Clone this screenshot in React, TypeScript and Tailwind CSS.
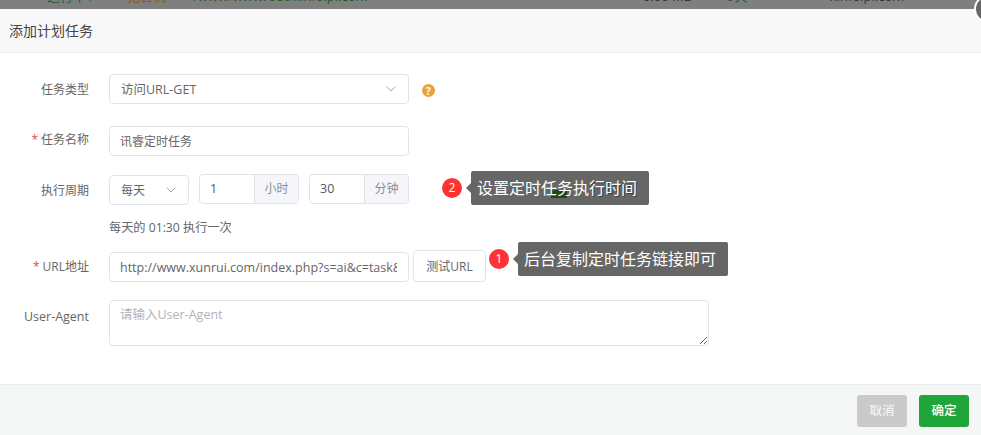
import { ChevronDown } from "lucide-react";
import type { ReactNode } from "react";

const FONT = "font-['Open_Sans','Noto_Sans_CJK_SC',sans-serif]";
const BORDER = "border border-[#e2e2ea]";

function Row({
  label,
  required,
  children,
  className = "",
  labelClass = "pt-[7px] text-[12px]",
}: {
  label: string;
  required?: boolean;
  children: ReactNode;
  className?: string;
  labelClass?: string;
}) {
  return (
    <div className={`flex items-start ${className}`}>
      <label className={`w-[89px] shrink-0 text-right leading-[18px] text-[#666] ${labelClass}`}>
        {required && <span className="mr-[3px] text-[#e5484d]">*</span>}
        {label}
      </label>
      <div className="ml-[20px] flex items-start">{children}</div>
    </div>
  );
}

function Addon({ value, unit, className = "" }: { value: string; unit: string; className?: string }) {
  return (
    <div className={`flex h-[30px] w-[100px] overflow-hidden rounded-[4px] ${BORDER} ${className}`}>
      <div className="w-[54px] pl-[10px] text-[12.5px] leading-[28px] text-[#555]">{value}</div>
      <div className="flex-1 border-l border-[#e2e2ea] bg-[#f4f6fa] text-center text-[12px] leading-[28px] text-[#8a8f99]">{unit}</div>
    </div>
  );
}

function Note({ n, children, className }: { n: number; children: ReactNode; className: string }) {
  return (
    <div className={`absolute flex items-center ${className}`}>
      <span className="flex h-[20px] w-[20px] items-center justify-center rounded-full bg-[#ff3333] text-[12px] text-white">{n}</span>
      <span className="ml-[4px] h-0 w-0 border-y-[5px] border-r-[5px] border-y-transparent border-r-[#666]" />
      <span className="relative flex h-[34px] items-center rounded-[2px] bg-[#666] pl-[6px] pr-[12px] text-[16px] text-white">{children}</span>
    </div>
  );
}

export default function App() {
  return (
    <div className={`relative flex h-[435px] w-[981px] flex-col overflow-hidden bg-white ${FONT}`}>
      {/* dimmed table behind the dialog */}
      <div className="h-[9px] shrink-0 overflow-hidden bg-[#7f7f7f] text-[13px] leading-[18px]">
        <div className="-mt-[13px] flex whitespace-nowrap">
          <span className="ml-[47px] w-[80px] text-[#1d5f3c]">运行中 /</span>
          <span className="w-[66px] text-[#8a5a20]">无宕机</span>
          <span className="w-[450px] text-[#1f5a1f]">/www/wwwroot/xinfolpi.com</span>
          <span className="w-[84px] text-[#333]">0.00 MB</span>
          <span className="w-[103px] text-[#1f5a4a]">9天</span>
          <span className="text-[#333]">xinfolpi.com</span>
        </div>
      </div>

      <div className="flex h-[44px] shrink-0 items-center border-b border-[#eeeeee] bg-[#f8f8f8] pl-[9px] text-[14px] text-[#444]">添加计划任务</div>

      <div className="flex flex-1 flex-col pt-[21px]">
        <Row label="任务类型">
          <div className={`flex h-[30px] w-[300px] items-center justify-between rounded-[4px] pl-[11px] pr-[9px] text-[12.5px] text-[#666] ${BORDER}`}>
            <span className="mt-[2px]">访问URL-GET</span>
            <ChevronDown size={16} strokeWidth={1} className="text-[#777]" />
          </div>
          <span className="ml-[13px] mt-[10px] flex h-[13px] w-[13px] items-center justify-center rounded-full bg-[#e8a33d] text-[10px] font-bold leading-none text-white">?</span>
        </Row>

        <Row label="任务名称" required className="mt-[22px]" labelClass="pt-[5px] text-[12px]">
          <div className={`h-[30px] w-[300px] rounded-[4px] pl-[10px] text-[12px] leading-[30px] text-[#666] ${BORDER}`}>讯睿定时任务</div>
        </Row>

        <Row label="执行周期" className="mt-[18px]" labelClass="pt-[8px] text-[12px]">
          <div className={`mt-[1px] flex h-[30px] w-[80px] items-center justify-between rounded-[4px] pl-[11px] pr-[9px] text-[12px] text-[#666] ${BORDER}`}>
            <span className="mt-[1px]">每天</span>
            <ChevronDown size={16} strokeWidth={1} className="text-[#777]" />
          </div>
          <Addon value="1" unit="小时" className="ml-[10px]" />
          <Addon value="30" unit="分钟" className="ml-[10px]" />
        </Row>

        <p className="ml-[109px] mt-[14px] text-[12.2px] leading-[18px] text-[#666]">每天的 01:30 执行一次</p>

        <Row label="URL地址" required className="mt-[13px]" labelClass="pt-[8px] text-[12px]">
          <div className={`mt-[2px] h-[30px] w-[300px] overflow-hidden whitespace-nowrap rounded-[4px] pl-[10px] pr-[11px] text-[12.5px] leading-[30px] text-[#666] ${BORDER}`}>
            <div className="overflow-hidden">http://www.xunrui.com/index.php?s=ai&amp;c=task&amp;m=run</div>
          </div>
          <button className={`ml-[4px] h-[32px] w-[73px] rounded-[4px] bg-white pt-[2px] text-[12px] text-[#666] ${BORDER}`}>测试URL</button>
        </Row>

        <Row label="User-Agent" className="mt-[18px]" labelClass="pt-[8px] text-[12.5px]">
          <textarea
            readOnly
            placeholder="请输入User-Agent"
            className={`h-[46px] w-[600px] rounded-[4px] px-[10px] py-[5px] text-[12.5px] leading-[18px] outline-none placeholder:text-[#b3b3b8] ${BORDER}`}
          />
        </Row>
      </div>

      <div className="flex h-[51px] shrink-0 items-start justify-end gap-[12px] border-t border-[#e9ecec] bg-[#f5f7f7] pr-[12px] pt-[10px]">
        <button className="h-[32px] w-[50px] rounded-[3px] bg-[#cacaca] text-[12.5px] font-medium text-[#f2f2f2]">取消</button>
        <button className="h-[32px] w-[50px] rounded-[3px] bg-[#20a53a] text-[12.5px] font-medium text-white">确定</button>
      </div>

      {/* close button of the dialog, sticking out of the corner */}
      <span className="absolute left-[974px] top-[-5px] h-[28px] w-[28px] rounded-full border-[2px] border-white bg-[#666]" />

      {/* screenshot annotations; the green bit and the shadow are the page showing through underneath */}
      <Note n={2} className="left-[442px] top-[171px]">
        <span className="absolute left-[80px] top-[19px] h-[8px] w-[16px] bg-[#1c4a1c]" />
        <span className="relative">
          设置定时任务执<span className="[text-shadow:1px_1px_0_#3d3d3d]">行时间</span>
        </span>
      </Note>
      <Note n={1} className="left-[489px] top-[242px]">
        后台复制定时任务链接即可
      </Note>
    </div>
  );
}
